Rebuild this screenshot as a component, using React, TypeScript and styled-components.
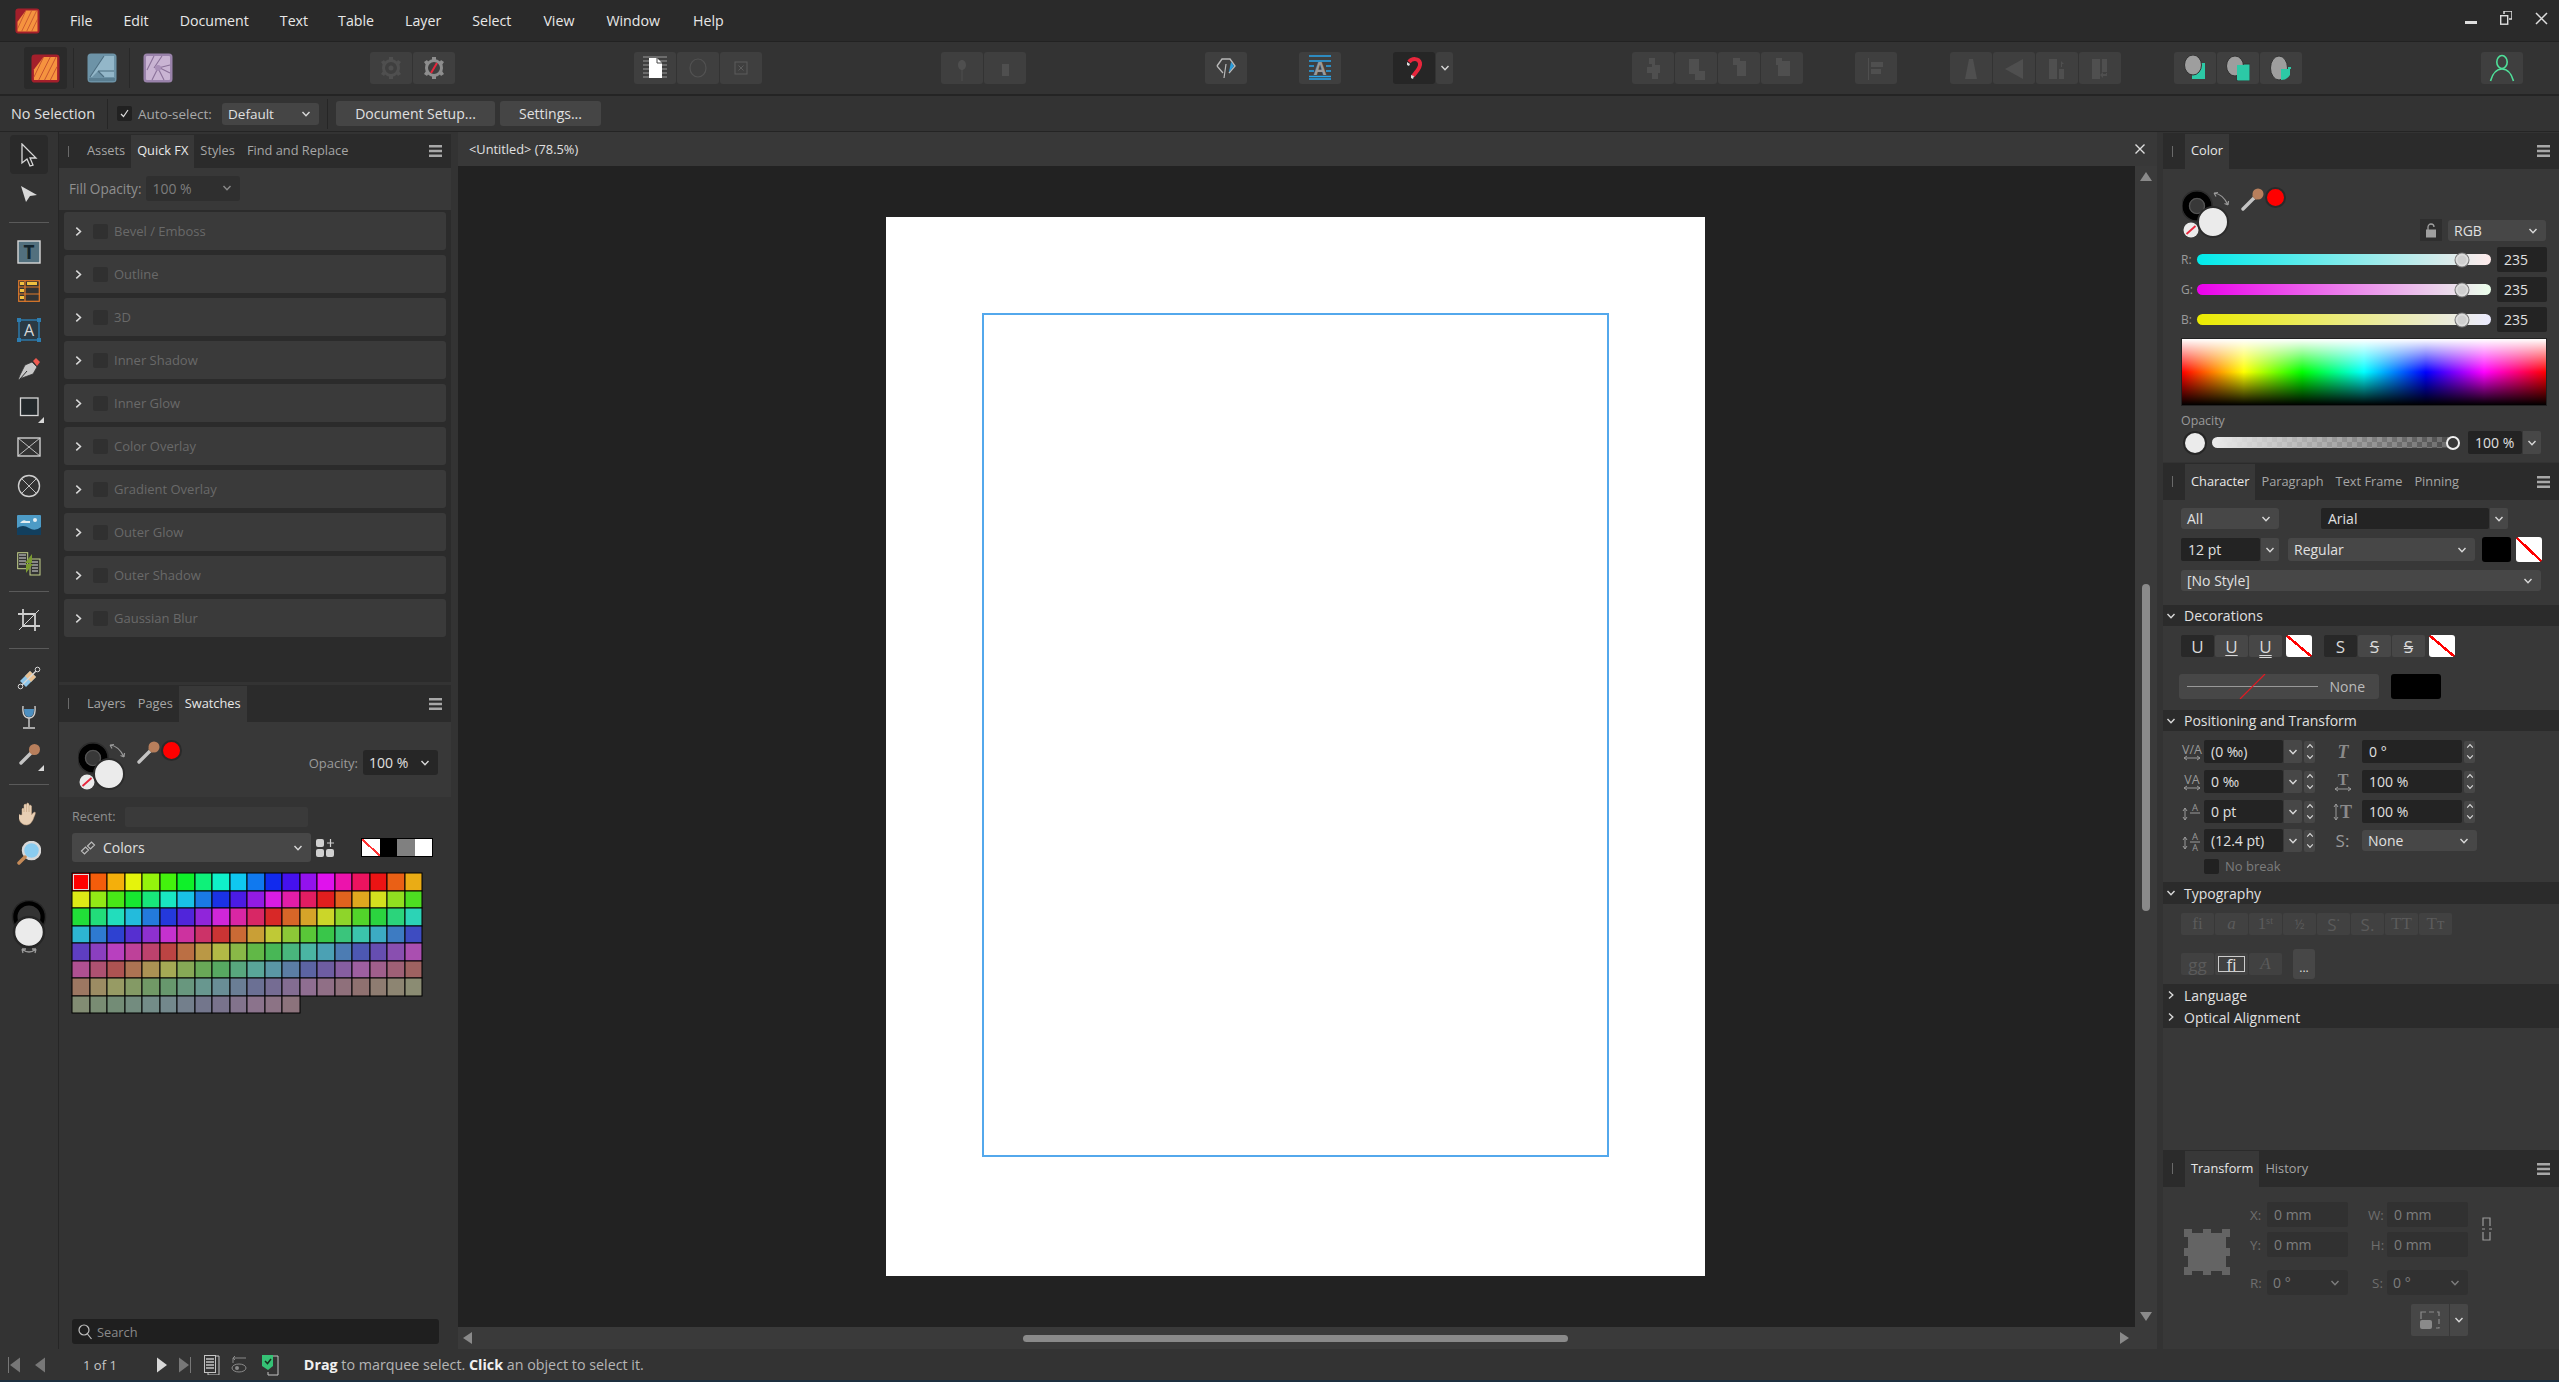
import React from 'react'
import styled, { createGlobalStyle } from 'styled-components'

const Global = createGlobalStyle`
  html, body { margin: 0; padding: 0; background: #333; overflow: hidden; }
  body { font-family: "Open Sans", "Noto Sans", sans-serif; font-size: 13.5px; color: #e4e4e4; }
  * { box-sizing: border-box; }
  svg { display: block; flex: none; }
`

const Shell = styled.div`
  width: 2559px;
  height: 1382px;
  display: flex;
  flex-direction: column;
  background: #333;
  overflow: hidden;
`

/* top bars */
const MenuBar = styled.div`
  height: 42px;
  flex: none;
  display: flex;
  align-items: center;
  background: #2a2a2a;
  border-bottom: 1px solid #222;
  padding-left: 15px;
`
const MenuItem = styled.span<{ $ml: number }>`
  margin-left: ${p => p.$ml}px;
  font-size: 14.2px;
  color: #e8e8e8;
`
const WindowControls = styled.div`
  margin-left: auto;
  margin-right: 11px;
  margin-bottom: 5px;
  display: flex;
  gap: 23px;
  align-items: center;
`
const Toolbar = styled.div`
  height: 54px;
  flex: none;
  display: flex;
  align-items: center;
  background: #333;
  border-bottom: 2px solid #242424;
  padding-left: 24px;
`
const PersonaBtn = styled.div<{ $active?: boolean }>`
  width: 43px;
  height: 42px;
  display: flex;
  align-items: center;
  justify-content: center;
  border-radius: 3px;
  background: ${p => (p.$active ? '#2a2a2a' : 'transparent')};
`
const PersonaSep = styled.div`
  width: 1px;
  height: 40px;
  margin: 0 6px;
  background: #282828;
`
const ToolBtn = styled.div<{ $ml?: number; $dark?: boolean; $w?: number }>`
  width: ${p => p.$w ?? 42}px;
  height: 32px;
  margin-left: ${p => p.$ml ?? 1}px;
  display: flex;
  align-items: center;
  justify-content: center;
  border-radius: 3px;
  background: ${p => (p.$dark ? '#262626' : '#3f3f3f')};
`
const ContextBar = styled.div`
  height: 36px;
  flex: none;
  display: flex;
  align-items: center;
  background: #333;
  border-bottom: 1px solid #242424;
  padding-left: 11px;
`
const CtxLabel = styled.span<{ $w: number; $dim?: boolean; $ml?: number; $fs?: number }>`
  width: ${p => p.$w}px;
  margin-left: ${p => p.$ml ?? 0}px;
  white-space: nowrap;
  font-size: ${p => p.$fs ?? 13.5}px;
  color: ${p => (p.$dim ? '#a8a8a8' : '#e0e0e0')};
`
const CtxSep = styled.div<{ $ml: number }>`
  width: 1px;
  height: 30px;
  margin-left: ${p => p.$ml}px;
  background: #262626;
`
const CtxButton = styled.div<{ $w: number; $ml: number }>`
  width: ${p => p.$w}px;
  height: 25px;
  margin-left: ${p => p.$ml}px;
  display: flex;
  align-items: center;
  justify-content: center;
  background: #454545;
  border-radius: 3px;
  font-size: 14px;
  color: #e0e0e0;
`
const Check = styled.div<{ $ml?: number }>`
  width: 15px;
  height: 15px;
  margin-left: ${p => p.$ml ?? 0}px;
  background: #212121;
  border-radius: 2px;
  display: flex;
  align-items: center;
  justify-content: center;
  flex: none;
`

/* main area */
const Main = styled.div`
  flex: 1;
  min-height: 0;
  display: flex;
`
const ToolColumn = styled.div`
  width: 59px;
  flex: none;
  display: flex;
  flex-direction: column;
  align-items: center;
  padding-top: 3px;
  background: #333;
  border-right: 1px solid #262626;
`
const Tool = styled.div<{ $active?: boolean }>`
  width: 38px;
  height: 39px;
  flex: none;
  display: flex;
  align-items: center;
  justify-content: center;
  border-radius: 4px;
  background: ${p => (p.$active ? '#2a2a2a' : 'transparent')};
`
const ToolSep = styled.div<{ $h: number }>`
  height: ${p => p.$h}px;
  width: 40px;
  flex: none;
  display: flex;
  align-items: center;
  &::after { content: ''; width: 100%; height: 1px; background: #5a5a5a; }
`
const ColorStack = styled.div`
  margin-top: 28px;
`

const LeftPanel = styled.div`
  width: 392px;
  flex: none;
  display: flex;
  flex-direction: column;
`
const RightPanel = styled.div`
  width: 396px;
  flex: none;
  display: flex;
  flex-direction: column;
  padding-top: 1px;
`
const TabStrip = styled.div<{ $h: number; $mt?: number }>`
  height: ${p => p.$h}px;
  margin-top: ${p => p.$mt ?? 0}px;
  flex: none;
  display: flex;
  align-items: stretch;
  background: #2b2b2b;
  padding-left: 9px;
  padding-right: 9px;
`
const Grip = styled.div`
  width: 1px;
  height: 11px;
  margin-right: 12px;
  align-self: center;
  background: #6a6a6a;
`
const Tab = styled.div<{ $active?: boolean }>`
  padding: 0 6px 3px;
  margin-top: 1px;
  display: flex;
  align-items: center;
  white-space: nowrap;
  font-size: 12.8px;
  color: ${p => (p.$active ? '#e8e8e8' : '#a6a6a6')};
  background: ${p => (p.$active ? '#383838' : 'transparent')};
`
const BurgerBox = styled.div`
  margin-left: auto;
  align-self: center;
`
const FillRow = styled.div`
  height: 42px;
  flex: none;
  display: flex;
  align-items: center;
  padding: 0 0 2px 10px;
  background: #383838;
  color: #8f8f8f;
  font-size: 13.6px;
`
const FxList = styled.div`
  height: 472px;
  flex: none;
  display: flex;
  flex-direction: column;
  gap: 5px;
  padding: 2px 5px 0;
  background: #2b2b2b;
`
const FxRow = styled.div`
  height: 38px;
  flex: none;
  display: flex;
  align-items: center;
  padding-left: 9px;
  border-radius: 3px;
  background: #3a3a3a;
  color: #696969;
  font-size: 13px;
`
const FxBox = styled.div`
  width: 15px;
  height: 15px;
  margin: 0 6px 0 9px;
  border-radius: 2px;
  background: #303030;
`
const PanelGap = styled.div`
  height: 3px;
  flex: none;
  background: #333;
`
const SwatchHead = styled.div`
  height: 75px;
  flex: none;
  display: flex;
  align-items: flex-start;
  padding: 20px 13px 0 19px;
  background: #383838;
`
const Dropper = styled.div<{ $mt: number }>`
  margin: ${p => p.$mt}px 0 0 11px;
  display: flex;
`
const RedDot = styled.div`
  width: 21px;
  height: 21px;
  border-radius: 50%;
  background: #f00;
  border: 2.5px solid #2a2a2a;
  flex: none;
`
const OpacityGroup = styled.div`
  margin-left: auto;
  margin-top: 8px;
  display: flex;
  align-items: center;
  gap: 5px;
  color: #9a9a9a;
  font-size: 13px;
`
const SwatchBody = styled.div`
  flex: 1;
  min-height: 0;
  display: flex;
  flex-direction: column;
  padding: 10px 13px 5px;
`
const RecentRow = styled.div`
  display: flex;
  align-items: center;
  height: 20px;
  color: #8f8f8f;
  font-size: 12.6px;
`
const RecentLabel = styled.span`
  width: 53px;
  margin-top: -2px;
`
const RecentBox = styled.div`
  width: 183px;
  height: 20px;
  background: #3a3a3a;
  border-radius: 2px;
`
const PaletteRow = styled.div`
  display: flex;
  align-items: center;
  margin-top: 6px;
  height: 29px;
`
const PaletteName = styled.span`
  display: flex;
  gap: 7px;
  align-items: center;
  margin-left: 2px;
`
const QuickCells = styled.div`
  display: flex;
  margin-left: 27px;
  border: 1px solid #000;
`
const QuickCell = styled.div<{ $c: string }>`
  width: 17.5px;
  height: 17px;
  background: ${p => p.$c};
`
const SwatchGrid = styled.div`
  margin-top: 11px;
  display: grid;
  grid-template-columns: repeat(20, 17.5px);
  grid-auto-rows: 17.5px;
`
const Swatch = styled.div<{ $sel?: boolean }>`
  box-shadow: inset 0 0 0 0.5px #000, 0 0 0 0.5px #000;
  outline: ${p => (p.$sel ? '1px solid #ddd' : 'none')};
  outline-offset: -2px;
`
const Search = styled.div`
  margin-top: auto;
  width: 367px;
  height: 25px;
  flex: none;
  display: flex;
  align-items: center;
  gap: 4px;
  padding-left: 6px;
  border-radius: 3px;
  background: #1f1f1f;
  color: #8a8a8a;
  font-size: 12.8px;
`

/* document view */
const DocColumn = styled.div`
  flex: 1;
  min-width: 0;
  margin: 0 6px 0 7px;
  display: flex;
  flex-direction: column;
`
const DocTab = styled.div`
  height: 34px;
  flex: none;
  display: flex;
  align-items: center;
  justify-content: space-between;
  padding: 0 12px 0 11px;
  background: #383838;
  font-size: 12.8px;
  color: #e0e0e0;
`
const DocMiddle = styled.div`
  flex: 1;
  min-height: 0;
  display: flex;
`
const Canvas = styled.div`
  flex: 1;
  display: flex;
  align-items: center;
  justify-content: center;
  background: #222;
  padding-right: 2px;
`
const Page = styled.div`
  width: 819px;
  height: 1059px;
  flex: none;
  padding: 96px 96px 119px;
  background: #fff;
`
const MarginGuide = styled.div`
  width: 100%;
  height: 100%;
  border: 2px solid #53a8ec;
`
const VScroll = styled.div`
  width: 22px;
  flex: none;
  display: flex;
  flex-direction: column;
  align-items: center;
  background: #3a3a3a;
  padding: 6px 0 6px;
`
const VThumb = styled.div`
  width: 8px;
  height: 327px;
  margin-top: 403px;
  border-radius: 4px;
  background: #8a8a8a;
`
const HScroll = styled.div`
  height: 22px;
  flex: none;
  display: flex;
  align-items: center;
  padding: 0 28px 0 5px;
  background: #3a3a3a;
`
const HThumb = styled.div`
  width: 545px;
  height: 7px;
  margin-left: 551px;
  margin-right: auto;
  border-radius: 4px;
  background: #8a8a8a;
`

/* right panel bodies */
const PanelBody = styled.div<{ $h?: number }>`
  ${p => (p.$h ? `height: ${p.$h}px; flex: none;` : 'flex: 1; min-height: 0;')}
  display: flex;
  flex-direction: column;
  background: #383838;
`
const Row = styled.div<{ $mt?: number; $h: number; $pl?: number }>`
  height: ${p => p.$h}px;
  margin-top: ${p => p.$mt ?? 0}px;
  padding-left: ${p => p.$pl ?? 18}px;
  flex: none;
  display: flex;
  align-items: center;
  white-space: nowrap;
`
const ColorHead = styled(Row)`
  align-items: flex-start;
  padding-right: 13px;
`
const WellOffset = styled.div`
  margin-top: 3px;
`
const HeadRight = styled.div`
  margin-left: auto;
  align-self: flex-end;
  display: flex;
  gap: 6px;
  align-items: flex-end;
`
const LockBox = styled.div`
  width: 22px;
  height: 22px;
  display: flex;
  align-items: center;
  justify-content: center;
  background: #2e2e2e;
`
const ChanLabel = styled.span`
  width: 16px;
  color: #9a9a9a;
  font-size: 12px;
`
const Slider = styled.div<{ $bg: string; $w: number }>`
  position: relative;
  width: ${p => p.$w}px;
  height: 11px;
  border-radius: 6px;
  background: ${p => p.$bg};
`
const Thumb = styled.div<{ $left: number; $size: number; $ring: string; $fill: string; $halo?: boolean }>`
  position: absolute;
  top: 50%;
  left: ${p => p.$left}px;
  width: ${p => p.$size}px;
  height: ${p => p.$size}px;
  transform: translate(-50%, -50%);
  border-radius: 50%;
  background: ${p => p.$fill};
  border: 2px solid ${p => p.$ring};
  box-shadow: ${p => (p.$halo ? '0 0 0 1px #777' : 'none')};
`
const Spectrum = styled.div`
  width: 366px;
  height: 68px;
  margin: 6px 0 0 18px;
  flex: none;
  border: 1px solid #222;
  background:
    linear-gradient(to bottom, #fff 0, rgba(255, 255, 255, 0) 50%, rgba(0, 0, 0, 0) 50%, #000 100%),
    linear-gradient(to right, #f00 0, #ff0 17%, #0f0 33%, #0ff 50%, #00f 67%, #f0f 83%, #f00 100%);
`
const SmallLabel = styled.div`
  margin: 8px 0 0 18px;
  height: 14px;
  line-height: 14px;
  color: #9a9a9a;
  font-size: 12.4px;
`
const OpacityDot = styled.div`
  width: 20px;
  height: 20px;
  margin: 0 7px 0 4px;
  flex: none;
  border-radius: 50%;
  background: #ebebeb;
  box-shadow: 0 0 0 2px #262626;
`
const Field = styled.div<{ $w: number; $h?: number; $ml?: number; $bg?: string; $dim?: boolean }>`
  width: ${p => p.$w}px;
  height: ${p => p.$h ?? 23}px;
  margin-left: ${p => p.$ml ?? 0}px;
  flex: none;
  display: flex;
  align-items: center;
  padding-left: 7px;
  border-radius: 2px;
  background: ${p => p.$bg ?? '#232323'};
  color: ${p => (p.$dim ? '#7d7d7d' : '#e0e0e0')};
  font-size: 14px;
`
const Select = styled.div<{ $w: number; $h?: number; $ml?: number; $bg?: string; $dim?: boolean; $fs?: number }>`
  width: ${p => p.$w}px;
  height: ${p => p.$h ?? 21}px;
  margin-left: ${p => p.$ml ?? 0}px;
  flex: none;
  display: flex;
  align-items: center;
  justify-content: space-between;
  padding: 0 8px 0 6px;
  border-radius: 3px;
  background: ${p => p.$bg ?? '#474747'};
  color: ${p => (p.$dim ? '#7d7d7d' : '#e0e0e0')};
  font-size: ${p => p.$fs ?? 14}px;
`
const Drop = styled.div<{ $w?: number; $h?: number }>`
  width: ${p => p.$w ?? 18}px;
  height: ${p => p.$h ?? 23}px;
  margin-left: 1px;
  flex: none;
  display: flex;
  align-items: center;
  justify-content: center;
  border-radius: 0 2px 2px 0;
  background: #474747;
`
const Spin = styled.div`
  width: 11px;
  height: 22px;
  margin-left: 2px;
  flex: none;
  display: flex;
  flex-direction: column;
  align-items: center;
  justify-content: center;
  gap: 3px;
  border-radius: 2px;
  background: #474747;
`
const Swatchy = styled.div<{ $w: number; $h: number; $ml?: number; $none?: boolean; $radius?: number }>`
  width: ${p => p.$w}px;
  height: ${p => p.$h}px;
  margin-left: ${p => p.$ml ?? 0}px;
  flex: none;
  border-radius: ${p => p.$radius ?? 3}px;
  background: ${p =>
    p.$none
      ? 'linear-gradient(to top right, #fff calc(50% - 1.2px), #f00 calc(50% - 1.2px), #f00 calc(50% + 1.2px), #fff calc(50% + 1.2px))'
      : '#000'};
`
const SectionHead = styled.div<{ $mt?: number; $h?: number }>`
  height: ${p => p.$h ?? 21}px;
  margin-top: ${p => p.$mt ?? 0}px;
  flex: none;
  display: flex;
  align-items: center;
  gap: 8px;
  padding-left: 3px;
  background: #2b2b2b;
  color: #e0e0e0;
  font-size: 14px;
`
const StyleBtn = styled.div<{ $ml?: number; $active?: boolean; $off?: boolean; $serif?: boolean; $fs?: number }>`
  width: 33px;
  height: 22px;
  margin-left: ${p => p.$ml ?? 1}px;
  flex: none;
  display: flex;
  align-items: center;
  justify-content: center;
  border-radius: 2px;
  background: ${p => (p.$active ? '#282828' : p.$off ? '#414141' : '#474747')};
  color: ${p => (p.$off ? '#5b5b5b' : '#d8d8d8')};
  font-size: ${p => p.$fs ?? 17}px;
  font-family: ${p => (p.$serif ? '"Liberation Serif", serif' : 'inherit')};
  text-underline-offset: 2px;
`
const LigatureBtn = styled(StyleBtn)`
  color: #ddd;
  outline: 1px solid #ccc;
  outline-offset: -4px;
`
const MoreBtn = styled.div`
  width: 22px;
  height: 30px;
  margin-left: 11px;
  display: flex;
  align-items: flex-end;
  justify-content: center;
  padding-bottom: 7px;
  border-radius: 3px;
  background: #474747;
  line-height: 8px;
  font-size: 12px;
  color: #ddd;
`
const LineSelect = styled.div`
  width: 200px;
  height: 25px;
  margin-left: -2px;
  position: relative;
  display: flex;
  align-items: center;
  justify-content: flex-end;
  padding-right: 14px;
  border-radius: 3px;
  background: #474747;
  color: #bbb;
  font-size: 14px;
`
const LineArt = styled.svg`
  position: absolute;
  left: 8px;
  top: 0;
`
const MetricIcon = styled.div<{ $w: number; $pad?: number }>`
  width: ${p => p.$w}px;
  padding-left: ${p => p.$pad ?? 0}px;
  flex: none;
  display: flex;
  justify-content: center;
`
const SnapLabel = styled.span`
  color: #9a9a9a;
  font-size: 17px;
`
const NoBreakText = styled.span`
  margin-left: 6px;
  line-height: 15px;
  color: #7d7d7d;
  font-size: 13px;
`
const TransformBody = styled.div`
  flex: 0 0 162px;
  display: flex;
  background: #383838;
`
const Anchor = styled.div`
  margin: 42px 0 0 21px;
`
const TransformFields = styled.div`
  margin: 15px 0 0 20px;
  display: flex;
  flex-direction: column;
`
const TfRow = styled.div<{ $mt?: number }>`
  display: flex;
  align-items: center;
  margin-top: ${p => p.$mt ?? 0}px;
`
const TfLabel = styled.span<{ $w: number; $ml?: number; $center?: boolean }>`
  width: ${p => p.$w}px;
  margin-left: ${p => p.$ml ?? 0}px;
  text-align: ${p => (p.$center ? 'center' : 'left')};
  flex: none;
  color: #6e6e6e;
  font-size: 13.4px;
`
const ChainBox = styled.div`
  margin: 30px 0 0 14px;
`
const ArrangeRow = styled.div`
  display: flex;
  margin: 9px 0 0 161px;
`
const ArrangeBtn = styled.div`
  width: 38px;
  height: 32px;
  display: flex;
  align-items: center;
  justify-content: center;
  background: #474747;
  border-radius: 2px 0 0 2px;
`

/* status bar */
const StatusBar = styled.div`
  height: 33px;
  flex: none;
  display: flex;
  align-items: center;
  padding-left: 8px;
  background: #333;
  border-bottom: 2px solid #1d2f3f;
  color: #b5b5b5;
  font-size: 14.3px;
`
const PageCount = styled.span`
  margin: 0 40px 0 38px;
  color: #c8c8c8;
  font-size: 13px;
  white-space: nowrap;
`
const StatusIcon = styled.div<{ $ml: number }>`
  margin-left: ${p => p.$ml}px;
`
const Hint = styled.span`
  margin-left: 25px;
  white-space: nowrap;
  b { color: #f0f0f0; font-weight: 700; }
`

/* drawings */
const Chev: React.FC<{ right?: boolean; up?: boolean; c?: string; s?: number }> = ({ right, up, c = '#d8d8d8', s = 10 }) => (
  <svg width={s} height={s} viewBox="0 0 10 10" style={{ transform: right ? 'rotate(-90deg)' : up ? 'rotate(180deg)' : undefined }}>
    <polyline points="1.5,3 5,6.8 8.5,3" fill="none" stroke={c} strokeWidth="1.4" />
  </svg>
)
const Burger = () => (
  <svg width="13" height="12" viewBox="0 0 13 12">
    <path d="M0 0h13v2.6H0zM0 4.7h13v2.6H0zM0 9.4h13V12H0z" fill="#a8a8a8" />
  </svg>
)
const LogoMark: React.FC<{ w: number; h: number }> = ({ w, h }) => (
  <svg width={w} height={h} viewBox="0 0 30 30" preserveAspectRatio="none">
    <rect x="0.5" y="0.5" width="29" height="29" rx="3.5" fill="#a31f2b" />
    <path d="M3 27V16L13 3h14v24z" fill="#f5933f" />
    <path d="M8 27 20 3M14 27 26 3M20 27l7-14M3 24 13 3" stroke="#c04a2c" strokeWidth="0.9" fill="none" />
  </svg>
)
const DesignerMark = () => (
  <svg width="30" height="30" viewBox="0 0 30 30">
    <rect x="0.5" y="0.5" width="29" height="29" rx="3.5" fill="#6d93a7" />
    <path d="M3 24 17 3h10v21H17l-6-6-6 6z" fill="#93b7c9" />
    <path d="M3 24 17 3M11 18l6 6M11 18h16" stroke="#4d6e80" strokeWidth="1.1" fill="none" />
    <rect x="2" y="25" width="26" height="3" fill="#5a7e91" />
  </svg>
)
const PhotoMark = () => (
  <svg width="30" height="30" viewBox="0 0 30 30">
    <rect x="0.5" y="0.5" width="29" height="29" rx="3.5" fill="#9a83ab" />
    <rect x="3" y="3" width="24" height="24" rx="1" fill="#c9b4d3" />
    <path d="M11 3 4 17M19 3l-8 12M27 12l-12 3M27 20l-10-5M21 27l-6-12M9 27l6-12" stroke="#8a7199" strokeWidth="1.1" fill="none" />
    <circle cx="15" cy="15" r="3" fill="#a98fb8" />
  </svg>
)
const Gear: React.FC<{ c: string; slash?: boolean }> = ({ c, slash }) => (
  <svg width="24" height="26" viewBox="0 0 24 26">
    <circle cx="12" cy="13" r="7.5" fill="none" stroke={c} strokeWidth="3" />
    <path d="M10 2h4v4h-4zM10 20h4v4h-4zM2 7l3-2 2 3-3 2zM22 7l-3-2-2 3 3 2zM2 19l3 2 2-3-3-2zM22 19l-3 2-2-3 3-2z" fill={c} />
    {slash ? <path d="M9 18l6-10" stroke="#e8263c" strokeWidth="2" /> : <circle cx="12" cy="13" r="2.5" fill={c} />}
  </svg>
)
const DocIcon = () => (
  <svg width="24" height="26" viewBox="0 0 24 26">
    <path d="M0 2h24M0 6h24M0 10h24M0 14h24M0 18h24M0 22h24" stroke="#9a9a9a" strokeWidth="1" />
    <path d="M6 3h8l5 5v15H6z" fill="#fff" />
    <path d="M14 3v5h5" fill="none" stroke="#444" strokeWidth="1" />
  </svg>
)
const Faint: React.FC<{ d: string }> = ({ d }) => (
  <svg width="26" height="26" viewBox="0 0 26 26">
    <path d={d} fill="#4f4f4f" />
  </svg>
)
const LassoIcon = () => (
  <svg width="22" height="24" viewBox="0 0 22 24">
    <path d="M2 10 7 3h8l5 7-6 7" fill="none" stroke="#b8b8b8" strokeWidth="1.4" />
    <path d="M2 10l6 7M11 8l-2 14" fill="none" stroke="#b8b8b8" strokeWidth="1.2" />
    <path d="M16 6l3 4-5 6z" fill="#2a9fe0" />
  </svg>
)
const BaselineIcon = () => (
  <svg width="24" height="26" viewBox="0 0 24 26">
    <path d="M1 1h22M1 6h22M1 11h5M18 11h5M1 16h5M18 16h5M1 21.5h22M1 24h22" stroke="#2aa5ec" strokeWidth="1.3" />
    <text x="12" y="20" textAnchor="middle" fontSize="18" fontWeight="700" fill="#9a9a9a">A</text>
  </svg>
)
const Magnet = () => (
  <svg width="20" height="24" viewBox="0 0 20 24">
    <path d="M5 6c3-4 10-4 11 1 1 5-4 9-7 13" fill="none" stroke="#e8263c" strokeWidth="4" />
    <path d="M3 6l3 2-1 2-2-1zM7 19l3 1-1 3-2-1z" fill="#ddd" />
  </svg>
)
const OpIcon: React.FC<{ kind: number }> = ({ kind }) => (
  <svg width="24" height="26" viewBox="0 0 24 26">
    {kind === 0 && <rect x="9" y="8" width="13" height="16" fill="#2cc9a6" />}
    {kind === 1 && <rect x="11" y="9" width="13" height="17" fill="#2cc9a6" stroke="#333" />}
    {kind === 2 && <rect x="10" y="12" width="12" height="13" fill="#2cc9a6" />}
    <ellipse cx={kind === 1 ? 9 : 10} cy={kind === 0 ? 10 : kind === 1 ? 11 : 13} rx="8.5" ry={kind === 2 ? 12 : 10} fill="#9e9e9e" stroke="#333" />
    {kind === 1 && <rect x="11" y="10" width="12" height="15" fill="#2cc9a6" />}
    {kind === 2 && <rect x="12" y="14" width="10" height="11" fill="#3f3f3f" />}
    {kind === 2 && <path d="M12 14h9v6q-3 5-9 5z" fill="#2cc9a6" />}
  </svg>
)
const UserIcon = () => (
  <svg width="26" height="28" viewBox="0 0 26 28">
    <ellipse cx="13" cy="8" rx="5.2" ry="6.5" fill="none" stroke="#4fe09a" strokeWidth="1.6" />
    <path d="M1.5 27C4 18 9 15 13 15s9 3 11.500 12" fill="none" stroke="#4fe09a" strokeWidth="1.6" />
  </svg>
)

const ArrowTool = () => (
  <svg width="18" height="24" viewBox="0 0 18 24">
    <path d="M2 1v19l5-4 3 7 3-1-3-7h6z" fill="#262626" stroke="#d8d8d8" strokeWidth="1.3" />
  </svg>
)
const NodeTool = () => (
  <svg width="18" height="18" viewBox="0 0 18 18">
    <path d="M1 1l16 9-7 1-4 6z" fill="#d8d8d8" />
  </svg>
)
const TextFrameTool = () => (
  <svg width="24" height="24" viewBox="0 0 24 24">
    <rect x="1" y="1" width="22" height="22" fill="#52707e" stroke="#d8d8d8" strokeWidth="1.4" />
    <text x="12" y="19" textAnchor="middle" fontSize="19" fontWeight="700" fill="#12242c">T</text>
  </svg>
)
const TableTool = () => (
  <svg width="22" height="22" viewBox="0 0 22 22">
    <rect x="0.7" y="0.7" width="20.6" height="20.6" fill="none" stroke="#e07a2a" strokeWidth="1.2" />
    <path d="M0 7h22M0 14h22M7 0v22" stroke="#e07a2a" strokeWidth="1.2" />
    <path d="M2 2h4v3H2zM9 2h10v3H9zM2 9h4v3H2zM2 16h4v3H2z" fill="#f0c040" />
  </svg>
)
const ArtTextTool = () => (
  <svg width="24" height="24" viewBox="0 0 24 24">
    <rect x="2" y="2" width="20" height="20" fill="#2a3a44" stroke="#2d7db0" strokeWidth="1.4" />
    <path d="M0 0h4v4H0zM20 0h4v4h-4zM0 20h4v4H0zM20 20h4v4h-4z" fill="#2d7db0" />
    <text x="12" y="18" textAnchor="middle" fontSize="16" fill="#d8d8d8">A</text>
  </svg>
)
const PenTool = () => (
  <svg width="24" height="24" viewBox="0 0 24 24">
    <path d="M15 5l5 5-4 7-11 4-4 2 2-5 5-10z" fill="#c8c8c8" stroke="#333" strokeWidth="0.8" />
    <path d="M3 22l7-8" stroke="#333" strokeWidth="1" />
    <path d="M16 4l3-3 4 4-3 4z" fill="#ef5a50" />
  </svg>
)
const RectTool = () => (
  <svg width="30" height="31" viewBox="0 0 30 31">
    <rect x="6.500" y="6" width="17.500" height="17.500" fill="#23292c" stroke="#d8d8d8" strokeWidth="1.300" />
    <path d="M30 25v6h-6z" fill="#d8d8d8" />
  </svg>
)
const FrameTool = () => (
  <svg width="24" height="20" viewBox="0 0 24 20">
    <rect x="1" y="1" width="22" height="18" fill="none" stroke="#cfcfcf" strokeWidth="1.4" />
    <path d="M1 1l22 18M23 1 1 19" stroke="#cfcfcf" strokeWidth="0.9" />
  </svg>
)
const EllipseTool = () => (
  <svg width="24" height="24" viewBox="0 0 24 24">
    <circle cx="12" cy="12" r="10.5" fill="none" stroke="#cfcfcf" strokeWidth="1.4" />
    <path d="M5 5l14 14M19 5 5 19" stroke="#cfcfcf" strokeWidth="0.9" />
  </svg>
)
const PictureTool = () => (
  <svg width="24" height="20" viewBox="0 0 24 20">
    <rect width="24" height="20" rx="1" fill="#4d9bc6" />
    <path d="M0 13q6-4 12 0t12-1v8H0z" fill="#123f5e" />
    <path d="M3 8q3-4 6-2h4v2z" fill="#e4eef2" />
    <circle cx="18" cy="5" r="2" fill="#e4eef2" />
  </svg>
)
const StudioTool = () => (
  <svg width="24" height="24" viewBox="0 0 24 24">
    <rect x="0.7" y="0.7" width="10" height="16" fill="none" stroke="#c4d08a" />
    <rect x="13" y="7" width="10" height="16" fill="none" stroke="#c4d08a" />
    <path d="M2 3h7M2 6h7M2 9h7M2 12h7M15 10h6M15 13h6M15 16h6M15 19h6" stroke="#ddd" strokeWidth="1.2" />
    <path d="M8 11l7-9v9zM16 12l-7 9v-9z" fill="#7a9a30" />
  </svg>
)
const CropTool = () => (
  <svg width="22" height="22" viewBox="0 0 22 22">
    <path d="M5 0v17h17M0 5h17v17" fill="none" stroke="#cfcfcf" strokeWidth="1.8" />
    <path d="M1 21 21 1" stroke="#cfcfcf" strokeWidth="1" />
  </svg>
)
const FillTool = () => (
  <svg width="24" height="24" viewBox="0 0 24 24">
    <path d="M3 15 13 5l6 6L9 21z" fill="#8ec6ea" />
    <path d="M8 10l5-5 6 6-5 5z" fill="#e8c090" />
    <path d="M4 20 20 4" stroke="#d8d8d8" strokeWidth="1.2" />
    <circle cx="3.500" cy="20.500" r="2.300" fill="#333" stroke="#d8d8d8" />
    <circle cx="20.500" cy="3.500" r="2.300" fill="#333" stroke="#d8d8d8" />
  </svg>
)
const GlassTool = () => (
  <svg width="16" height="24" viewBox="0 0 16 24">
    <path d="M2 1q-1 12 6 12t6-12" fill="none" stroke="#cfcfcf" strokeWidth="1.4" />
    <path d="M3 4h10q0 8-5 8t-5-8z" fill="#4d8fc0" />
    <path d="M8 13v9M2 23h12" stroke="#cfcfcf" strokeWidth="1.4" />
  </svg>
)
const DropperIcon = () => (
  <svg width="24" height="24" viewBox="0 0 24 24">
    <path d="M2 22 13 11" stroke="#c4c4c4" strokeWidth="3.400" strokeLinecap="round" />
    <path d="M12 8l4 4" stroke="#8a6a50" strokeWidth="3" />
    <circle cx="17" cy="7" r="5.500" fill="#b87f5c" />
  </svg>
)
const DropperTool = () => (
  <svg width="30" height="31" viewBox="0 0 30 31">
    <path d="M7 23 17 13" stroke="#c4c4c4" strokeWidth="3.400" strokeLinecap="round" />
    <path d="M16 10l4 4" stroke="#8a6a50" strokeWidth="3" />
    <circle cx="20.500" cy="9.500" r="5.500" fill="#b87f5c" />
    <path d="M30 25v6h-6z" fill="#d8d8d8" />
  </svg>
)
const HandTool = () => (
  <svg width="20" height="24" viewBox="0 0 20 24">
    <path d="M3 13V7q1-2 2 0v3V3q1-2 2.500 0v7V2q1-2 2.500 0v8V4q1-2 2.500 0v9q2-3 3.500-3 1 1-1 5-2 7-7 8-6 0-8-6l-2-4q1-2 3 0z" fill="#e8cfb4" stroke="#caa988" strokeWidth="0.5" />
  </svg>
)
const ZoomTool = () => (
  <svg width="24" height="24" viewBox="0 0 24 24">
    <circle cx="14.500" cy="9.500" r="8.500" fill="#8accf0" stroke="#d8d8d8" strokeWidth="2.500" />
    <path d="M2 22l6-6" stroke="#c48a58" strokeWidth="3.500" strokeLinecap="round" />
  </svg>
)
const FillStroke = () => (
  <svg width="36" height="56" viewBox="0 0 36 56">
    <circle cx="18" cy="17" r="14" fill="none" stroke="#000" strokeWidth="5" />
    <circle cx="18" cy="17" r="16.500" fill="none" stroke="#262626" strokeWidth="1.500" />
    <circle cx="18" cy="32" r="15" fill="#ebebeb" stroke="#262626" strokeWidth="2.500" />
    <path d="M11 49q7 6 14 0M11 49l1 4M11 49l4 0M25 49l-1 4M25 49l-4 0" fill="none" stroke="#9a9a9a" strokeWidth="1.300" />
  </svg>
)
const ColorWell = () => (
  <svg width="48" height="48" viewBox="0 0 48 48">
    <circle cx="15" cy="16" r="11.500" fill="none" stroke="#000" strokeWidth="6.500" />
    <circle cx="15" cy="16" r="15.300" fill="none" stroke="#2c2c2c" strokeWidth="1.500" />
    <circle cx="15" cy="16" r="7.500" fill="none" stroke="#555" strokeWidth="1.200" />
    <circle cx="9" cy="40" r="7.500" fill="#ebebeb" />
    <path d="M4.500 44 13.500 36" stroke="#e8263c" strokeWidth="1.800" />
    <circle cx="31" cy="32" r="15" fill="#ebebeb" stroke="#2c2c2c" strokeWidth="2" />
    <path d="M32 3q9 1 14 12M32 3l2 3.500M32 3l4-.5M46 15l-3.500-1.500M46 15l.5-4" fill="none" stroke="#9a9a9a" strokeWidth="1.200" />
  </svg>
)
const LinkIcon = () => (
  <svg width="16" height="16" viewBox="0 0 16 16">
    <path d="M1.500 11l4-4 3 3-4 4zM7.500 6l4-4 3 3-4 4z" fill="none" stroke="#bcbcbc" strokeWidth="1.200" />
  </svg>
)
const AddGrid = () => (
  <svg width="18" height="18" viewBox="0 0 18 18" style={{ marginLeft: 5 }}>
    <path d="M11 4h7M14.500 0v8" stroke="#d0d0d0" strokeWidth="1.200" />
    <rect x="0" y="0" width="8" height="8" rx="2" fill="#d0d0d0" />
    <rect x="0" y="10" width="8" height="8" rx="2" fill="#d0d0d0" />
    <rect x="10" y="10" width="8" height="8" rx="2" fill="#d0d0d0" />
  </svg>
)
const SearchIcon = () => (
  <svg width="15" height="16" viewBox="0 0 15 16">
    <circle cx="6" cy="6" r="5" fill="none" stroke="#c0c0c0" strokeWidth="1.200" />
    <path d="M9.500 10l4 5" stroke="#c0c0c0" strokeWidth="1.200" />
  </svg>
)
const LockIcon = () => (
  <svg width="12" height="15" viewBox="0 0 12 15">
    <path d="M3 7V4a3 3 0 0 1 6 0" fill="none" stroke="#a0a0a0" strokeWidth="1.300" />
    <rect x="1" y="6.500" width="10" height="8" fill="#a0a0a0" />
  </svg>
)
const Metric: React.FC<{ top: string }> = ({ top }) => (
  <svg width="22" height="20" viewBox="0 0 22 20">
    <text x="11" y="12" textAnchor="middle" fontSize="12.500" fill="#9a9a9a">{top}</text>
    <path d="M3 16h16M3 16l3-2M3 16l3 2M19 16l-3-2M19 16l-3 2" stroke="#9a9a9a" fill="none" />
  </svg>
)
const LeadMetric: React.FC<{ stacked?: boolean }> = ({ stacked }) => (
  <svg width="22" height="20" viewBox="0 0 22 20">
    <text x="14" y="9" textAnchor="middle" fontSize="9.500" fill="#9a9a9a">A</text>
    <path d="M9 11h10" stroke="#9a9a9a" />
    {stacked && <text x="14" y="20" textAnchor="middle" fontSize="9" fill="#9a9a9a">A</text>}
    <path d="M4 6v12M4 6 2 9M4 6l2 3M4 18l-2-3M4 18l2-3" stroke="#9a9a9a" fill="none" />
  </svg>
)
const SerifMetric: React.FC<{ kind: 'italic' | 'h' | 'v' }> = ({ kind }) => (
  <svg width="20" height="20" viewBox="0 0 20 20">
    <text x={kind === 'v' ? 13 : 10} y={kind === 'h' ? 13 : 16} textAnchor="middle" fontFamily="Liberation Serif" fontWeight="700" fontStyle={kind === 'italic' ? 'italic' : 'normal'} fontSize={kind === 'h' ? 16 : 18} fill="#8a8a8a">T</text>
    {kind === 'h' && <path d="M2 17h16M2 17l3-2M2 17l3 2M18 17l-3-2M18 17l-3 2" stroke="#9a9a9a" fill="none" />}
    {kind === 'v' && <path d="M3 2v16M3 2 1 5M3 2l2 3M3 18l-2-3M3 18l2-3" stroke="#9a9a9a" fill="none" />}
  </svg>
)
const AnchorGrid = () => (
  <svg width="46" height="46" viewBox="0 0 46 46">
    <path d="M0 0h8v4h11v-4h8v4h11v-4h8v8h-4v11h4v8h-4v11h4v8h-8v-4H27v4h-8v-4H8v4H0v-8h4V27H0v-8h4V8H0z" fill="#646464" />
  </svg>
)
const ChainIcon = () => (
  <svg width="10" height="24" viewBox="0 0 10 24">
    <path d="M1 9V1h7v8M1 15v8h7v-8" fill="none" stroke="#9a9a9a" strokeWidth="1.200" />
    <path d="M0 12h3M7 12h3" stroke="#9a9a9a" strokeWidth="1.200" />
  </svg>
)
const ArrangeIcon = () => (
  <svg width="20" height="18" viewBox="0 0 20 18">
    <path d="M1 8V1h5M9 1h5M17 1h2v4M19 8v5M19 16v1h-3" fill="none" stroke="#8a8a8a" strokeWidth="1.200" />
    <rect x="0" y="9" width="12" height="9" rx="2" fill="#8a8a8a" />
  </svg>
)
const Skip: React.FC<{ dir: 'l' | 'r'; bar?: boolean; c: string; w?: number }> = ({ dir, bar, c, w = 12 }) => (
  <svg width={w} height="18" viewBox="0 0 12 18" style={{ transform: dir === 'l' ? 'scaleX(-1)' : undefined }}>
    <path d="M0 1.500 10 9 0 16.500z" fill={c} />
    {bar && <path d="M11.500 1v16" stroke={c} />}
  </svg>
)
const SpreadIcon = () => (
  <svg width="16" height="20" viewBox="0 0 16 20">
    <path d="M12 1h3v19H4v-2" fill="none" stroke="#c4c4c4" />
    <rect x="0.500" y="0.500" width="11" height="17" fill="none" stroke="#c4c4c4" />
    <path d="M2 4h8M2 7h8M2 10h8M2 13h8" stroke="#c4c4c4" strokeWidth="1.300" />
  </svg>
)
const BleedIcon = () => (
  <svg width="18" height="18" viewBox="0 0 18 18">
    <path d="M16 2H3v5M3 2l2-2M3 2l2 2" fill="none" stroke="#8a8a8a" />
    <ellipse cx="9" cy="12" rx="7" ry="4" fill="none" stroke="#8a8a8a" />
    <circle cx="7" cy="12" r="2" fill="#8a8a8a" />
  </svg>
)
const PreflightIcon = () => (
  <svg width="18" height="22" viewBox="0 0 18 22">
    <path d="M11 2h6v19H7v-3" fill="none" stroke="#c4c4c4" />
    <path d="M1 1h11v11l-5 4-6-4z" fill="#35c275" />
    <path d="M4 7l2.500 2.500L10 5" fill="none" stroke="#16321f" strokeWidth="1.500" />
  </svg>
)
const SpinBox = () => (
  <Spin><Chev up s={8} /><Chev s={8} /></Spin>
)

const menus: [string, number][] = [
  ['File', 30], ['Edit', 31], ['Document', 31], ['Text', 31], ['Table', 30], ['Layer', 31],
  ['Select', 31], ['View', 32], ['Window', 32], ['Help', 33],
]
const fxNames = ['Bevel / Emboss', 'Outline', '3D', 'Inner Shadow', 'Inner Glow', 'Color Overlay', 'Gradient Overlay', 'Outer Glow', 'Outer Shadow', 'Gaussian Blur']

// the palette is a hue sweep that loses saturation as it goes
const swatchColor = (i: number) => {
  if (i === 0) return '#ff0000'
  const hue = (i * 21.18) % 360
  const sat = i < 60 ? 92 - 0.45 * i : Math.max(10, 65 - 0.7 * (i - 60))
  return `hsl(${hue}, ${sat}%, 50%)`
}
const swatches = Array.from({ length: 153 }, (_, i) => swatchColor(i))

const chanGradients = [
  'linear-gradient(to right, rgb(0,235,235), rgb(255,235,235))',
  'linear-gradient(to right, rgb(235,0,235), rgb(235,255,235))',
  'linear-gradient(to right, rgb(235,235,0), rgb(235,235,255))',
]

const App: React.FC = () => (
  <Shell>
    <Global />
    <MenuBar>
      <LogoMark w={25} h={26} />
      {menus.map(([name, gap]) => (
        <MenuItem key={name} $ml={gap}>{name}</MenuItem>
      ))}
      <WindowControls>
        <svg width="12" height="12" viewBox="0 0 12 12"><path d="M0 9h12v3H0z" fill="#ddd" /></svg>
        <svg width="12" height="14" viewBox="0 0 12 14"><path d="M4 3V0h8v8H9" fill="none" stroke="#ddd" strokeWidth="1.500" /><rect x="0.700" y="4.700" width="7" height="8.500" fill="none" stroke="#ddd" strokeWidth="1.400" /></svg>
        <svg width="13" height="13" viewBox="0 0 13 13"><path d="M1 1l11 11M12 1 1 12" stroke="#ddd" strokeWidth="1.500" /></svg>
      </WindowControls>
    </MenuBar>

    <Toolbar>
      <PersonaBtn $active><LogoMark w={29} h={29} /></PersonaBtn>
      <PersonaSep />
      <PersonaBtn><DesignerMark /></PersonaBtn>
      <PersonaSep />
      <PersonaBtn><PhotoMark /></PersonaBtn>

      <ToolBtn $ml={191}><Gear c="#4f4f4f" /></ToolBtn>
      <ToolBtn><Gear c="#8e8e8e" slash /></ToolBtn>

      <ToolBtn $ml={179}><DocIcon /></ToolBtn>
      <ToolBtn><svg width="18" height="20" viewBox="0 0 18 20"><ellipse cx="9" cy="10" rx="8" ry="9" fill="none" stroke="#525252" strokeWidth="1.200" /></svg></ToolBtn>
      <ToolBtn><svg width="14" height="14" viewBox="0 0 14 14"><rect x="1" y="1" width="12" height="12" fill="none" stroke="#5c5c5c" /><path d="M4.500 4.500l5 5M9.500 4.500l-5 5" stroke="#5c5c5c" /></svg></ToolBtn>

      <ToolBtn $ml={179}><Faint d="M13 5c2.500 0 4 2.500 4 5s-1.500 5-4 5-4-2.500-4-5 1.500-5 4-5zM12.500 15h1v11h-1z" /></ToolBtn>
      <ToolBtn><Faint d="M10 9h7v12h-7z" /></ToolBtn>

      <ToolBtn $ml={179}><LassoIcon /></ToolBtn>
      <ToolBtn $ml={52}><BaselineIcon /></ToolBtn>
      <ToolBtn $ml={52} $dark><Magnet /></ToolBtn>
      <ToolBtn $w={17}><Chev /></ToolBtn>

      <ToolBtn $ml={179}><Faint d="M9 3h6v7h5v8h-2v6h-6v-6H7v-6h5V9H9z" /></ToolBtn>
      <ToolBtn><Faint d="M6 4h10v12h6v9H12v-6H6z" /></ToolBtn>
      <ToolBtn><Faint d="M7 3h7v3h6v15h-9V10H7z" /></ToolBtn>
      <ToolBtn><Faint d="M7 3h6v3h8v15H9V10H7z" /></ToolBtn>
      <ToolBtn $ml={52}><Faint d="M5 3h1v22H5zM8 7h12v5H8zM8 14h10v5H8z" /></ToolBtn>
      <ToolBtn $ml={53}><Faint d="M11 4h4l4 20H7z" /></ToolBtn>
      <ToolBtn><Faint d="M22 4v20L4 14z" /></ToolBtn>
      <ToolBtn><Faint d="M5 4h8v20H5zM15 12h2V6l3 3h-2v3h-3zM15 14h5v10h-5z" /></ToolBtn>
      <ToolBtn><Faint d="M5 4h8v20H5zM15 4h5v13h-5zM20 18v3h-4v2l-3-3 3-3v2h3v-1z" /></ToolBtn>

      <ToolBtn $ml={53}><OpIcon kind={0} /></ToolBtn>
      <ToolBtn><OpIcon kind={1} /></ToolBtn>
      <ToolBtn><OpIcon kind={2} /></ToolBtn>

      <ToolBtn $ml={179}><UserIcon /></ToolBtn>
    </Toolbar>

    <ContextBar>
      <CtxLabel $w={96} $fs={14.4}>No Selection</CtxLabel>
      <CtxSep $ml={0} />
      <Check $ml={9}><svg width="9" height="9" viewBox="0 0 9 9"><path d="M1 5l2.500 2.500L8 1" fill="none" stroke="#ddd" strokeWidth="1.200" /></svg></Check>
      <CtxLabel $w={84} $dim $ml={6}>Auto-select:</CtxLabel>
      <Select $w={97} $h={22} $bg="#454545" $fs={13.500}>Default<Chev /></Select>
      <CtxSep $ml={8} />
      <CtxButton $w={159} $ml={8}>Document Setup...</CtxButton>
      <CtxButton $w={101} $ml={5}>Settings...</CtxButton>
    </ContextBar>

    <Main>
      <ToolColumn>
        <Tool $active><ArrowTool /></Tool>
        <Tool><NodeTool /></Tool>
        <ToolSep $h={19} />
        <Tool><TextFrameTool /></Tool>
        <Tool><TableTool /></Tool>
        <Tool><ArtTextTool /></Tool>
        <Tool><PenTool /></Tool>
        <Tool><RectTool /></Tool>
        <Tool><FrameTool /></Tool>
        <Tool><EllipseTool /></Tool>
        <Tool><PictureTool /></Tool>
        <Tool><StudioTool /></Tool>
        <ToolSep $h={17} />
        <Tool><CropTool /></Tool>
        <ToolSep $h={19} />
        <Tool><FillTool /></Tool>
        <Tool><GlassTool /></Tool>
        <Tool><DropperTool /></Tool>
        <ToolSep $h={19} />
        <Tool><HandTool /></Tool>
        <Tool><ZoomTool /></Tool>
        <ColorStack><FillStroke /></ColorStack>
      </ToolColumn>

      <LeftPanel>
        <TabStrip $h={34} $mt={2}>
          <Grip />
          <Tab>Assets</Tab>
          <Tab $active>Quick FX</Tab>
          <Tab>Styles</Tab>
          <Tab>Find and Replace</Tab>
          <BurgerBox><Burger /></BurgerBox>
        </TabStrip>
        <FillRow>
          Fill Opacity:
          <Select $w={94} $h={25} $ml={5} $bg="#2f2f2f" $dim>100 %<Chev c="#8a8a8a" /></Select>
        </FillRow>
        <FxList>
          {fxNames.map(name => (
            <FxRow key={name}><Chev right s={11} /><FxBox />{name}</FxRow>
          ))}
        </FxList>
        <PanelGap />
        <TabStrip $h={37}>
          <Grip />
          <Tab>Layers</Tab>
          <Tab>Pages</Tab>
          <Tab $active>Swatches</Tab>
          <BurgerBox><Burger /></BurgerBox>
        </TabStrip>
        <SwatchHead>
          <ColorWell />
          <Dropper $mt={-2}><DropperIcon /><RedDot /></Dropper>
          <OpacityGroup>
            Opacity:
            <Select $w={75} $h={25} $bg="#262626">100 %<Chev /></Select>
          </OpacityGroup>
        </SwatchHead>
        <SwatchBody>
          <RecentRow><RecentLabel>Recent:</RecentLabel><RecentBox /></RecentRow>
          <PaletteRow>
            <Select $w={239} $h={29}>
              <PaletteName><LinkIcon />Colors</PaletteName>
              <Chev />
            </Select>
            <AddGrid />
            <QuickCells>
              <QuickCell $c="linear-gradient(to top right, #fff calc(50% - 1px), #f33 calc(50% - 1px), #f33 calc(50% + 1px), #fff calc(50% + 1px))" />
              <QuickCell $c="#000" />
              <QuickCell $c="#808080" />
              <QuickCell $c="#fff" />
            </QuickCells>
          </PaletteRow>
          <SwatchGrid>
            {swatches.map((c, i) => (
              <Swatch key={i} $sel={i === 0} style={{ background: c }} />
            ))}
          </SwatchGrid>
          <Search><SearchIcon />Search</Search>
        </SwatchBody>
      </LeftPanel>

      <DocColumn>
        <DocTab>
          &lt;Untitled&gt; (78.5%)
          <svg width="10" height="10" viewBox="0 0 10 10"><path d="M0.500 0.500l9 9M9.500 0.500l-9 9" stroke="#ddd" strokeWidth="1.400" /></svg>
        </DocTab>
        <DocMiddle>
          <Canvas>
            <Page><MarginGuide /></Page>
          </Canvas>
          <VScroll>
            <svg width="12" height="9" viewBox="0 0 12 9"><path d="M6 0l6 9H0z" fill="#8a8a8a" /></svg>
            <VThumb />
            <svg width="12" height="9" viewBox="0 0 12 9" style={{ marginTop: 'auto' }}><path d="M6 9l6-9H0z" fill="#8a8a8a" /></svg>
          </VScroll>
        </DocMiddle>
        <HScroll>
          <svg width="9" height="12" viewBox="0 0 9 12"><path d="M0 6l9-6v12z" fill="#8a8a8a" /></svg>
          <HThumb />
          <svg width="9" height="12" viewBox="0 0 9 12"><path d="M9 6 0 0v12z" fill="#8a8a8a" /></svg>
        </HScroll>
      </DocColumn>

      <RightPanel>
        <TabStrip $h={36}>
          <Grip />
          <Tab $active>Color</Tab>
          <BurgerBox><Burger /></BurgerBox>
        </TabStrip>
        <PanelBody $h={293}>
          <ColorHead $mt={18} $h={54} $pl={19}>
            <WellOffset><ColorWell /></WellOffset>
            <Dropper $mt={0}><DropperIcon /><RedDot /></Dropper>
            <HeadRight>
              <LockBox><LockIcon /></LockBox>
              <Select $w={98}>RGB<Chev /></Select>
            </HeadRight>
          </ColorHead>
          {['R:', 'G:', 'B:'].map((l, i) => (
            <Row key={l} $mt={i === 0 ? 6 : 5} $h={25}>
              <ChanLabel>{l}</ChanLabel>
              <Slider $w={294} $bg={chanGradients[i]}>
                <Thumb $left={265} $size={13} $ring="#ddd" $fill="#cfcfcf" $halo />
              </Slider>
              <Field $w={50} $h={25} $ml={6}>235</Field>
            </Row>
          ))}
          <Spectrum />
          <SmallLabel>Opacity</SmallLabel>
          <Row $mt={3} $h={23}>
            <OpacityDot />
            <Slider $w={243} $bg="linear-gradient(to right, #ebebeb, rgba(235,235,235,0)), repeating-conic-gradient(#6a6a6a 0 25%, #484848 0 50%) 0 0 / 10px 10px">
              <Thumb $left={241} $size={14} $ring="#f0f0f0" $fill="#383838" />
            </Slider>
            <Field $w={54} $ml={13}>100 %</Field>
            <Drop><Chev /></Drop>
          </Row>
        </PanelBody>

        <TabStrip $h={37} $mt={1}>
          <Grip />
          <Tab $active>Character</Tab>
          <Tab>Paragraph</Tab>
          <Tab>Text Frame</Tab>
          <Tab>Pinning</Tab>
          <BurgerBox><Burger /></BurgerBox>
        </TabStrip>
        <PanelBody>
          <Row $mt={8} $h={21}>
            <Select $w={98}>All<Chev /></Select>
            <Field $w={168} $h={21} $ml={42}>Arial</Field>
            <Drop $h={21}><Chev /></Drop>
          </Row>
          <Row $mt={9} $h={23}>
            <Field $w={79}>12 pt</Field>
            <Drop><Chev /></Drop>
            <Select $w={187} $h={23} $ml={9}>Regular<Chev /></Select>
            <Swatchy $w={29} $h={25} $ml={7} />
            <Swatchy $w={26} $h={25} $ml={5} $none />
          </Row>
          <Row $mt={9} $h={21}>
            <Select $w={360}>[No Style]<Chev /></Select>
          </Row>
          <SectionHead $mt={14}><Chev />Decorations</SectionHead>
          <Row $mt={9} $h={22}>
            <StyleBtn $ml={0} $active>U</StyleBtn>
            <StyleBtn><u>U</u></StyleBtn>
            <StyleBtn><u style={{ textDecorationStyle: 'double' }}>U</u></StyleBtn>
            <Swatchy $w={26} $h={22} $ml={4} $none />
            <StyleBtn $ml={12} $active>S</StyleBtn>
            <StyleBtn><s>S</s></StyleBtn>
            <StyleBtn><s style={{ textDecorationStyle: 'double' }}>S</s></StyleBtn>
            <Swatchy $w={26} $h={22} $ml={4} $none />
          </Row>
          <Row $mt={17} $h={25}>
            <LineSelect>
              <LineArt width="132" height="25" viewBox="0 0 132 25">
                <path d="M0 12.500h131" stroke="#999" />
                <path d="M53 25 78 0" stroke="#e01b24" strokeWidth="1.200" />
              </LineArt>
              None
            </LineSelect>
            <Swatchy $w={50} $h={25} $ml={12} />
          </Row>
          <SectionHead $mt={11}><Chev />Positioning and Transform</SectionHead>

          <Row $mt={9} $h={23} $pl={17}>
            <MetricIcon $w={24}><Metric top="V/A" /></MetricIcon>
            <Field $w={79}>(0 ‰)</Field><Drop><Chev /></Drop><SpinBox />
            <MetricIcon $w={47} $pad={8}><SerifMetric kind="italic" /></MetricIcon>
            <Field $w={100}>0 °</Field><SpinBox />
          </Row>
          <Row $mt={7} $h={23} $pl={17}>
            <MetricIcon $w={24}><Metric top="VA" /></MetricIcon>
            <Field $w={79}>0 ‰</Field><Drop><Chev /></Drop><SpinBox />
            <MetricIcon $w={47} $pad={8}><SerifMetric kind="h" /></MetricIcon>
            <Field $w={100}>100 %</Field><SpinBox />
          </Row>
          <Row $mt={7} $h={23} $pl={17}>
            <MetricIcon $w={24}><LeadMetric /></MetricIcon>
            <Field $w={79}>0 pt</Field><Drop><Chev /></Drop><SpinBox />
            <MetricIcon $w={47} $pad={8}><SerifMetric kind="v" /></MetricIcon>
            <Field $w={100}>100 %</Field><SpinBox />
          </Row>
          <Row $mt={6} $h={23} $pl={17}>
            <MetricIcon $w={24}><LeadMetric stacked /></MetricIcon>
            <Field $w={79}>(12.4 pt)</Field><Drop><Chev /></Drop><SpinBox />
            <MetricIcon $w={47} $pad={8}><SnapLabel>S:</SnapLabel></MetricIcon>
            <Select $w={115} $h={21}>None<Chev /></Select>
          </Row>
          <Row $mt={7} $h={15} $pl={41}>
            <Check /><NoBreakText>No break</NoBreakText>
          </Row>
          <SectionHead $mt={8} $h={22}><Chev />Typography</SectionHead>
          <Row $mt={9} $h={22}>
            <StyleBtn $ml={0} $off $serif>fi</StyleBtn>
            <StyleBtn $off $serif><i>a</i></StyleBtn>
            <StyleBtn $off $serif>1ˢᵗ</StyleBtn>
            <StyleBtn $off $fs={13}>½</StyleBtn>
            <StyleBtn $off>S˙</StyleBtn>
            <StyleBtn $off>S.</StyleBtn>
            <StyleBtn $off $serif>TT</StyleBtn>
            <StyleBtn $off $serif>Tт</StyleBtn>
          </Row>
          <Row $mt={14} $h={30}>
            <StyleBtn $ml={0} $off>gg</StyleBtn>
            <LigatureBtn $off>fi</LigatureBtn>
            <StyleBtn $off $serif><i>A</i></StyleBtn>
            <MoreBtn>...</MoreBtn>
          </Row>
          <SectionHead $mt={5} $h={22}><Chev right />Language</SectionHead>
          <SectionHead $h={22}><Chev right />Optical Alignment</SectionHead>
        </PanelBody>

        <TabStrip $h={37}>
          <Grip />
          <Tab $active>Transform</Tab>
          <Tab>History</Tab>
          <BurgerBox><Burger /></BurgerBox>
        </TabStrip>
        <TransformBody>
          <Anchor><AnchorGrid /></Anchor>
          <TransformFields>
            <TfRow>
              <TfLabel $w={17}>X:</TfLabel><Field $w={81} $h={25} $bg="#313131" $dim>0 mm</Field>
              <TfLabel $w={19} $ml={20}>W:</TfLabel><Field $w={81} $h={25} $bg="#313131" $dim>0 mm</Field>
            </TfRow>
            <TfRow $mt={5}>
              <TfLabel $w={17}>Y:</TfLabel><Field $w={81} $h={25} $bg="#313131" $dim>0 mm</Field>
              <TfLabel $w={19} $ml={20} $center>H:</TfLabel><Field $w={81} $h={25} $bg="#313131" $dim>0 mm</Field>
            </TfRow>
            <TfRow $mt={13}>
              <TfLabel $w={17}>R:</TfLabel><Select $w={81} $h={25} $bg="#313131" $dim>0 °<Chev c="#7d7d7d" /></Select>
              <TfLabel $w={19} $ml={20} $center>S:</TfLabel><Select $w={81} $h={25} $bg="#313131" $dim>0 °<Chev c="#7d7d7d" /></Select>
            </TfRow>
            <ArrangeRow>
              <ArrangeBtn><ArrangeIcon /></ArrangeBtn>
              <Drop $h={32}><Chev /></Drop>
            </ArrangeRow>
          </TransformFields>
          <ChainBox><ChainIcon /></ChainBox>
        </TransformBody>
      </RightPanel>
    </Main>

    <StatusBar>
      <Skip dir="l" bar c="#777" />
      <StatusIcon $ml={13}><Skip dir="l" c="#777" /></StatusIcon>
      <PageCount>1 of 1</PageCount>
      <Skip dir="r" c="#d8d8d8" />
      <StatusIcon $ml={10}><Skip dir="r" bar c="#777" /></StatusIcon>
      <StatusIcon $ml={13}><SpreadIcon /></StatusIcon>
      <StatusIcon $ml={10}><BleedIcon /></StatusIcon>
      <StatusIcon $ml={13}><PreflightIcon /></StatusIcon>
      <Hint><b>Drag</b> to marquee select. <b>Click</b> an object to select it.</Hint>
    </StatusBar>
  </Shell>
)

export default App
